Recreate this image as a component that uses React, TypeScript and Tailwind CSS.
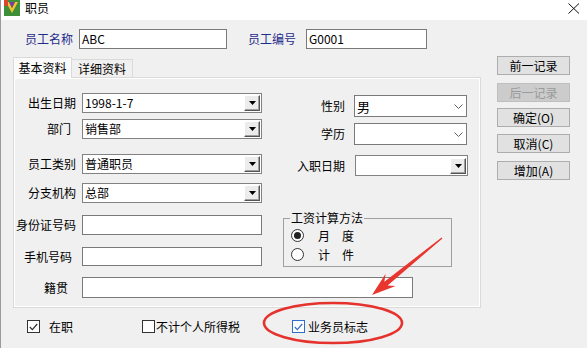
import React from 'react';

function DropArrow() {
  return (
    <svg width="7" height="4" viewBox="0 0 7 4">
      <polygon points="0,0 7,0 3.5,4" fill="#000" />
    </svg>
  );
}

function OldCombo({ value, className }: { value: string; className: string }) {
  return (
    <div className={`flex items-center bg-white border border-[#828282] ${className}`}>
      <span className="flex-1 pl-[2px] leading-none">{value}</span>
      <div className="mr-[1px] flex h-[16px] w-[16px] items-center justify-center border border-t-white border-l-white border-r-[#555] border-b-[#555] bg-[#ececec] shadow-[inset_-1px_-1px_0_#a0a0a0]">
        <DropArrow />
      </div>
    </div>
  );
}

function ModernCombo({ value, className }: { value: string; className: string }) {
  return (
    <div className={`flex items-center bg-white border border-[#7a7a7a] ${className}`}>
      <span className="flex-1 pl-[2px] text-[13px] leading-none">{value}</span>
      <svg width="9" height="5" viewBox="0 0 9 5" className="mr-[3px]">
        <polyline points="0.5,0.5 4.5,4.5 8.5,0.5" fill="none" stroke="#606060" strokeWidth="1" />
      </svg>
    </div>
  );
}

function TextBox({ value, className }: { value?: string; className: string }) {
  return (
    <div className={`flex items-center bg-white border border-[#7a7a7a] pl-[2px] leading-none ${className}`}>
      {value}
    </div>
  );
}

function Label({ text, className = '' }: { text: string; className?: string }) {
  return <span className={`w-[62px] shrink-0 text-right leading-none ${className}`}>{text}</span>;
}

function Radio({ checked }: { checked?: boolean }) {
  return (
    <span className="flex h-[13px] w-[13px] items-center justify-center rounded-full border border-[#333] bg-white">
      {checked ? <span className="h-[7px] w-[7px] rounded-full bg-[#222]" /> : null}
    </span>
  );
}

function Check({ checked, blue }: { checked?: boolean; blue?: boolean }) {
  const color = blue ? '#2f6fc7' : '#333';
  return (
    <span className={`flex h-[13px] w-[13px] items-center justify-center border bg-white ${blue ? 'border-[#2f6fc7]' : 'border-[#333]'}`}>
      {checked ? (
        <svg width="9" height="8" viewBox="0 0 9 8">
          <polyline points="0.8,4 3.3,6.6 8.2,1" fill="none" stroke={color} strokeWidth="1.2" />
        </svg>
      ) : null}
    </span>
  );
}

function SideButton({ text, disabled, className = '' }: { text: string; disabled?: boolean; className?: string }) {
  return (
    <button
      type="button"
      className={`flex h-[19px] w-[73px] items-center justify-center border leading-none ${
        disabled ? 'border-[#bfbfbf] bg-[#cccccc] text-[#9a9a9a]' : 'border-[#adadad] bg-[#e1e1e1] text-black'
      } ${className}`}
    >
      {text}
    </button>
  );
}

export default function App() {
  return (
    <div className="relative h-[348px] w-[587px] overflow-hidden border-l border-[#9a9a9a] bg-[#f0f0f0] font-['Noto_Sans_CJK_SC','Microsoft_YaHei',sans-serif] text-[12px] text-black">
      {/* title bar */}
      <div className="flex h-[20px] items-start bg-white">
        <svg width="16" height="16" viewBox="0 0 16 16" className="ml-[3px]">
          <rect x="0" y="0" width="16" height="16" fill="#3f8f3a" />
          <polygon points="2,2 8,13 14,2 11,2 8,8 5,2" fill="#f4c430" />
          <polygon points="5,2 8,8 11,2" fill="#7b3fa0" />
          <rect x="0" y="0" width="4" height="6" fill="#d9462b" />
        </svg>
        <span className="ml-[5px] leading-[16px]">职员</span>
        <svg width="12" height="11" viewBox="0 0 12 11" className="ml-auto mr-[7px] mt-[3px]">
          <line x1="0.5" y1="0.5" x2="11" y2="10.5" stroke="#111" strokeWidth="1" />
          <line x1="11" y1="0.5" x2="0.5" y2="10.5" stroke="#111" strokeWidth="1" />
        </svg>
      </div>

      {/* name / number row */}
      <div className="mt-[9px] flex h-[20px] items-center">
        <span className="ml-[24px] w-[48px] leading-none text-[#1f2a8a]">员工名称</span>
        <TextBox value="ABC" className="ml-[6px] h-[20px] w-[148px]" />
        <span className="ml-[21px] w-[48px] leading-none text-[#1f2a8a]">员工编号</span>
        <TextBox value="G0001" className="ml-[10px] h-[20px] w-[121px]" />
      </div>

      {/* main area */}
      <div className="mt-[7px] flex items-start">
        <div className="ml-[12px] w-[468px]">
          <div className="flex h-[21px] items-end">
            <div className="relative z-10 -mb-px flex h-[21px] w-[59px] items-center justify-center border border-b-0 border-[#dadada] bg-[#fbfbfb] leading-none">
              基本资料
            </div>
            <div className="flex h-[18px] w-[61px] items-center justify-center border border-b-0 border-l-0 border-[#dadada] bg-[#f0f0f0] leading-none">
              详细资料
            </div>
          </div>

          <div className="h-[231px] border border-[#dadada] bg-[#f0f0f0] shadow-[inset_1px_1px_0_#fff,inset_-1px_-1px_0_#fff]">
            {/* combos */}
            <div className="flex items-start pt-[15px]">
              <div className="flex flex-col">
                <div className="flex items-center">
                  <Label text="出生日期" />
                  <OldCombo value="1998-1-7" className="ml-[6px] h-[20px] w-[180px]" />
                </div>
                <div className="mt-[6px] flex items-center">
                  <Label text="部门" className="pr-[5px]" />
                  <OldCombo value="销售部" className="ml-[6px] h-[20px] w-[180px]" />
                </div>
                <div className="mt-[15px] flex items-center">
                  <Label text="员工类别" />
                  <OldCombo value="普通职员" className="ml-[6px] h-[20px] w-[180px]" />
                </div>
                <div className="mt-[9px] flex items-center">
                  <Label text="分支机构" />
                  <OldCombo value="总部" className="ml-[6px] h-[20px] w-[180px]" />
                </div>
              </div>

              <div className="ml-[35px] flex flex-col pt-[2px]">
                <div className="flex items-center">
                  <span className="w-[48px] text-right leading-none">性别</span>
                  <ModernCombo value="男" className="ml-[9px] h-[22px] w-[113px]" />
                </div>
                <div className="mt-[6px] flex items-center">
                  <span className="w-[48px] text-right leading-none">学历</span>
                  <ModernCombo value="" className="ml-[9px] h-[22px] w-[113px]" />
                </div>
                <div className="mt-[10px] flex items-center">
                  <span className="w-[48px] text-right leading-none">入职日期</span>
                  <OldCombo value="" className="ml-[10px] h-[21px] w-[113px]" />
                </div>
              </div>
            </div>

            {/* id / phone + salary group */}
            <div className="mt-[12px] flex items-start">
              <div className="flex flex-col">
                <div className="flex items-center">
                  <Label text="身份证号码" />
                  <TextBox className="ml-[6px] h-[20px] w-[180px]" />
                </div>
                <div className="mt-[12px] flex items-center">
                  <Label text="手机号码" className="pr-[4px]" />
                  <TextBox className="ml-[6px] h-[19px] w-[180px]" />
                </div>
              </div>

              <fieldset className="ml-[21px] mt-[-3px] h-[55px] w-[169px] border border-[#a0a0a0]">
                <legend className="ml-[6px] px-[1px] leading-[12px]">工资计算方法</legend>
                <div className="mt-[5px] ml-[7px] flex items-center">
                  <Radio checked />
                  <span className="ml-[14px] leading-none">月　度</span>
                </div>
                <div className="mt-[6px] ml-[7px] flex items-center">
                  <Radio />
                  <span className="ml-[14px] leading-none">计　件</span>
                </div>
              </fieldset>
            </div>

            <div className="mt-[10px] flex items-center">
              <Label text="籍贯" className="pr-[8px]" />
              <TextBox className="ml-[6px] h-[21px] w-[331px]" />
            </div>
          </div>
        </div>

        <div className="ml-[16px] flex flex-col">
          <SideButton text="前一记录" />
          <SideButton text="后一记录" disabled className="mt-[8px]" />
          <SideButton text="确定(O)" className="mt-[6px]" />
          <SideButton text="取消(C)" className="mt-[7px]" />
          <SideButton text="增加(A)" className="mt-[8px]" />
        </div>
      </div>

      {/* bottom checkboxes */}
      <div className="mt-[12px] flex h-[13px] items-center">
        <span className="ml-[26px]">
          <Check checked />
        </span>
        <span className="ml-[9px] leading-none">在职</span>
        <span className="ml-[69px]">
          <Check />
        </span>
        <span className="ml-[1px] leading-none">不计个人所得税</span>
        <span className="ml-[52px]">
          <Check checked blue />
        </span>
        <span className="ml-[3px] leading-none">业务员标志</span>
      </div>

      {/* annotation overlay */}
      <svg className="pointer-events-none absolute left-0 top-0" width="587" height="348" viewBox="-1 0 587 348">
        <ellipse cx="331" cy="323" rx="69" ry="20" fill="none" stroke="#e5322d" strokeWidth="2.6" />
        <polygon
          points="440.4,238.5 385.6,285.5 393.6,286.1 370,295 383.6,273.7 382.4,281.7 439.6,237.5"
          fill="#e8362f"
        />
      </svg>
    </div>
  );
}
